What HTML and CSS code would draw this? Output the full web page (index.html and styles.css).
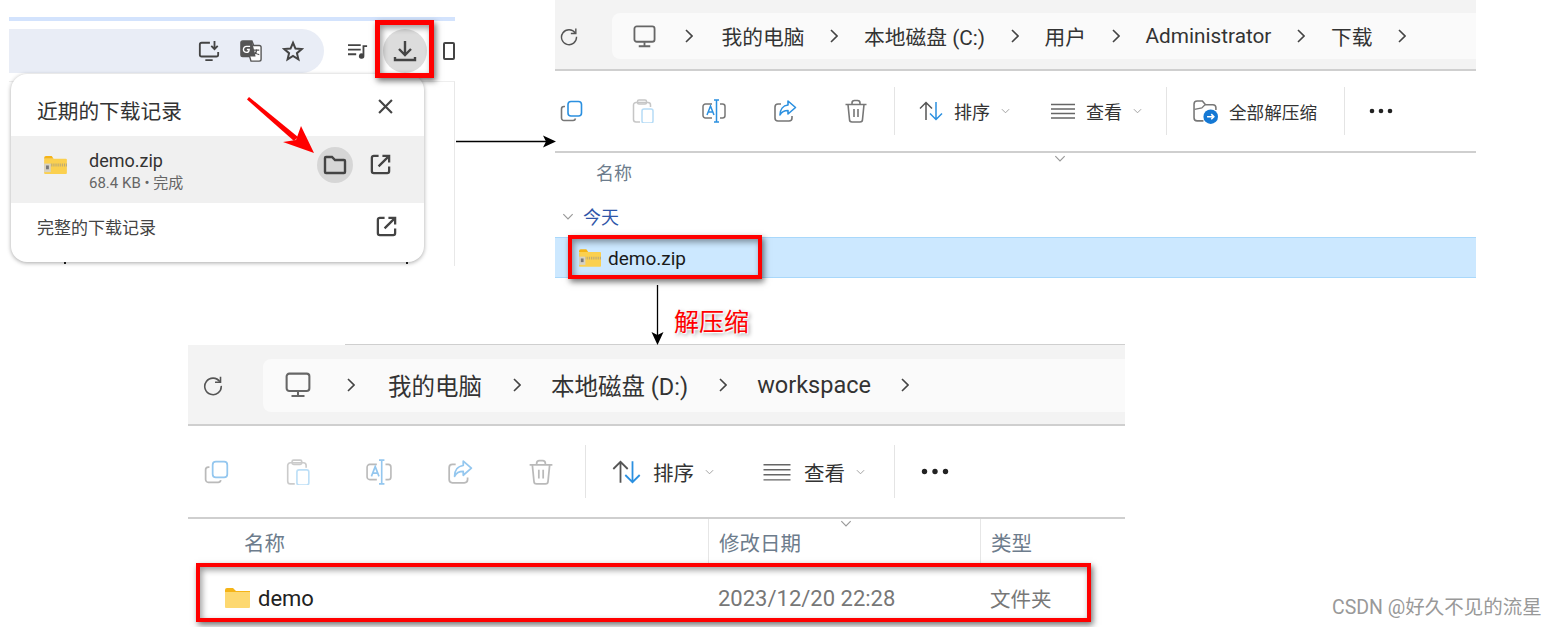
FILE: index.html
```html
<!DOCTYPE html>
<html lang="zh-CN">
<head>
  <meta charset="UTF-8">
  <title>demo.zip 下载并解压缩</title>
  <link rel="stylesheet" href="styles.css">
</head>
<body>

<svg class="defs" width="0" height="0">
  <symbol id="i-chevron" viewBox="0 0 8 14"><path d="M1 1l6 6-6 6" fill="none" stroke="#444" stroke-width="1.6"/></symbol>
  <symbol id="i-caret" viewBox="0 0 10 6"><path d="M1 1l4 4 4-4" fill="none" stroke="#999" stroke-width="1"/></symbol>
  <symbol id="i-refresh" viewBox="0 0 24 24" fill="none" stroke="#555" stroke-width="1.700"><path d="M19.5 8.5A9 9 0 1 0 21 13"/><path d="M20.2 3v6h-6"/></symbol>
  <symbol id="i-pc" viewBox="0 0 24 24" fill="none" stroke="#666" stroke-width="1.9"><rect x="1.5" y="1.5" width="21" height="16" rx="2.5"/><path d="M12 18v3.5M6 22.2h12"/></symbol>
  <symbol id="i-copy" viewBox="0 0 24 24" fill="none" stroke-width="1.6"><path d="M5 7.5H4a2.5 2.5 0 0 0-2.500 2.500v9A2.500 2.500 0 0 0 4 21.500h9a2.500 2.500 0 0 0 2.500-2" stroke="#777"/><rect x="8" y="2.500" width="13.500" height="14.500" rx="3" stroke="#2b90e0"/></symbol>
  <symbol id="i-paste" viewBox="0 0 24 24" fill="none" stroke-width="1.5"><path d="M9 23H5a2.500 2.500 0 0 1-2.500-2.500V6A2.500 2.500 0 0 1 5 3.500h12A2.500 2.500 0 0 1 19.500 6v2" stroke="#999"/><rect x="6.500" y="1" width="9" height="4" rx="1.500" stroke="#999"/><rect x="11" y="10" width="11" height="14" rx="2" stroke="#7cc0f0"/></symbol>
  <symbol id="i-rename" viewBox="0 0 24 24" fill="none" stroke-width="1.500"><path d="M10 5H3.500A2.500 2.500 0 0 0 1 7.500v9A2.500 2.500 0 0 0 3.500 19H10M18 5h2.500A2.500 2.500 0 0 1 23 7.500v9a2.500 2.500 0 0 1-2.500 2.500H18" stroke="#777"/><path d="M14.500 1v22M12 1h5M12 23h5" stroke="#2b90e0"/><path d="M5 16l3.500-9 3.500 9M6.200 13h4.600" stroke="#2b90e0"/></symbol>
  <symbol id="i-share" viewBox="0 0 24 24" fill="none" stroke-width="1.600"><path d="M8 5H5a3 3 0 0 0-3 3v11a3 3 0 0 0 3 3h11a3 3 0 0 0 3-3v-2" stroke="#777"/><path d="M15 2l7.500 6.500L15 15v-3.500c-4 0-6.500 1.500-8 4.500 0-5.500 3-9.500 8-10z" stroke="#2b90e0" stroke-linejoin="round"/></symbol>
  <symbol id="i-trash" viewBox="0 0 24 24" fill="none" stroke="#777" stroke-width="1.600"><path d="M1.500 5.500h21M8 5.500V4a2.500 2.500 0 0 1 2.500-2.500h3A2.500 2.500 0 0 1 16 4v1.500M4 5.500l1.500 15A2.500 2.500 0 0 0 8 23h8a2.500 2.500 0 0 0 2.500-2.500l1.500-15M10 10v8M14 10v8"/></symbol>
  <symbol id="i-sort" viewBox="0 0 24 20" fill="none" stroke-width="1.500"><path d="M7 19V1.500M1 7.500l6-6 6 6" stroke="#555"/><path d="M17 1v17.500M11 12.500l6 6 6-6" stroke="#2b90e0"/></symbol>
  <symbol id="i-view" viewBox="0 0 24 16" fill="none" stroke="#666" stroke-width="1.300"><path d="M0 1.500h24M0 6h24M0 10.500h24M0 15h24"/></symbol>
  <symbol id="i-extract" viewBox="0 0 24 24"><path d="M10 21H4a3 3 0 0 1-3-3V5a3 3 0 0 1 3-3h5l3 3.500h7a3 3 0 0 1 3 3v2" fill="none" stroke="#777" stroke-width="1.500"/><path d="M1.500 10l7-1.500 3-3" fill="none" stroke="#777" stroke-width="1.200"/><circle cx="17" cy="17" r="7" fill="#1478d4"/><path d="M13.500 17h6.500M17.500 14.500L20 17l-2.500 2.500" fill="none" stroke="#fff" stroke-width="1.500"/></symbol>
  <symbol id="i-dots" viewBox="0 0 24 6" fill="#222"><circle cx="3" cy="3" r="2.300"/><circle cx="12" cy="3" r="2.300"/><circle cx="21" cy="3" r="2.300"/></symbol>
  <symbol id="i-zip" viewBox="0 0 24 19"><path d="M0 2a2 2 0 0 1 2-2h6l2 3H0z" fill="#f5b417"/><rect y="3" width="24" height="16" rx="1" fill="#fbd04f"/><path d="M7 9.500h17" stroke="#b9a878" stroke-width="3" stroke-dasharray="1 1"/><rect y="8" width="7" height="9" fill="#d7d2c4"/><rect x="2" y="10" width="3" height="4" fill="#777"/></symbol>
  <symbol id="i-folder" viewBox="0 0 25 20"><path d="M0 2a2 2 0 0 1 2-2h6l3 3h14v2H0z" fill="#f5b417"/><path d="M0 4h25v15a1 1 0 0 1-1 1H1a1 1 0 0 1-1-1z" fill="#fdd870"/></symbol>
  <symbol id="i-open" viewBox="0 0 24 24" fill="none" stroke="#444" stroke-width="2.400"><path d="M10 3H5a2 2 0 0 0-2 2v14a2 2 0 0 0 2 2h14a2 2 0 0 0 2-2v-5"/><path d="M14 3h7v7M21 3L10 14"/></symbol>
</svg>

<!-- browser download bubble -->
<section class="chrome">
  <div class="chrome-strip"></div>
  <div class="chrome-bar">
    <div class="omnibox">
      <svg class="omni-icon" viewBox="0 0 24 24" fill="none" stroke="#444" stroke-width="2"><path d="M13 3H4a2 2 0 0 0-2 2v11a2 2 0 0 0 2 2h16a2 2 0 0 0 2-2v-3M8 22h8"/><path d="M18 1v9M14.500 6.500L18 10l3.500-3.500"/></svg>
      <svg class="omni-icon" viewBox="0 0 24 24"><path d="M3 1h10l2 5h6a2 2 0 0 1 2 2v13a2 2 0 0 1-2 2h-9l-1.500-5H3a2 2 0 0 1-2-2V3a2 2 0 0 1 2-2z" fill="#fff" stroke="#555" stroke-width="1.500"/><path d="M3 1h10l4 17H3a2 2 0 0 1-2-2V3a2 2 0 0 1 2-2z" fill="#555"/><path d="M11 7H7a2.500 2.500 0 1 0 0 6.500c2 0 3-1 3-3.200H7.500" fill="none" stroke="#fff" stroke-width="1.500"/><path d="M15 11h6M18 10v1.500c0 2-2 4-3.500 4.500M16 13c1 1.500 3 3 5 3" fill="none" stroke="#555" stroke-width="1.200"/></svg>
      <svg class="omni-icon omni-star" viewBox="0 0 24 24" fill="none" stroke="#444" stroke-width="2.200"><path d="M12 3l2.700 6.300 6.800.6-5.200 4.500 1.600 6.600L12 17.400 6.100 21l1.600-6.600L2.500 9.900l6.800-.6z"/></svg>
    </div>
    <svg class="media-icon" viewBox="0 0 22 18" fill="#444"><path d="M0 1h14v2H0zM0 6h14v2H0zM0 11h9v2H0z"/><path d="M16 2h5v2h-3v10a3 3 0 1 1-2-2.800z"/></svg>
    <div class="download-btn">
      <svg viewBox="0 0 24 24" fill="none" stroke="#444" stroke-width="2.400"><path d="M12 2v13M6 10l6 6 6-6M2 18v3h20v-3"/></svg>
    </div>
    <div class="side-icon"></div>
  </div>
  <div class="page-edge">
    <span class="speck speck-a"></span>
    <span class="speck speck-b"></span>
  </div>

  <div class="bubble">
    <div class="bubble-head">
      <span class="bubble-title">近期的下载记录</span>
      <svg class="bubble-close" viewBox="0 0 14 14" fill="none" stroke="#444" stroke-width="2"><path d="M1 1l12 12M13 1L1 13"/></svg>
    </div>
    <div class="bubble-item">
      <svg class="bubble-zip"><use href="#i-zip"/></svg>
      <div class="bubble-file">
        <div class="bubble-name">demo.zip</div>
        <div class="bubble-meta">68.4 KB • 完成</div>
      </div>
      <div class="folder-btn">
        <svg viewBox="0 0 24 20" fill="none" stroke="#444" stroke-width="2.400"><path d="M2 3a1 1 0 0 1 1-1h6l3 3h9a1 1 0 0 1 1 1v11a1 1 0 0 1-1 1H3a1 1 0 0 1-1-1z"/></svg>
      </div>
      <svg class="open-icon open-item"><use href="#i-open"/></svg>
    </div>
    <div class="bubble-foot">
      <span class="bubble-all">完整的下载记录</span>
      <svg class="open-icon"><use href="#i-open"/></svg>
    </div>
  </div>
</section>

<!-- explorer: C drive downloads -->
<section class="explorer ex-top">
  <div class="addr">
    <svg class="refresh"><use href="#i-refresh"/></svg>
    <div class="crumbs">
      <svg class="pc"><use href="#i-pc"/></svg>
      <svg class="chev"><use href="#i-chevron"/></svg>
      <span>我的电脑</span>
      <svg class="chev"><use href="#i-chevron"/></svg>
      <span>本地磁盘 (C:)</span>
      <svg class="chev"><use href="#i-chevron"/></svg>
      <span>用户</span>
      <svg class="chev"><use href="#i-chevron"/></svg>
      <span>Administrator</span>
      <svg class="chev"><use href="#i-chevron"/></svg>
      <span>下载</span>
      <svg class="chev"><use href="#i-chevron"/></svg>
    </div>
  </div>
  <div class="tools">
    <svg class="tool"><use href="#i-copy"/></svg>
    <svg class="tool dim"><use href="#i-paste"/></svg>
    <svg class="tool"><use href="#i-rename"/></svg>
    <svg class="tool"><use href="#i-share"/></svg>
    <svg class="tool tool-last"><use href="#i-trash"/></svg>
    <div class="sep"></div>
    <svg class="sort"><use href="#i-sort"/></svg>
    <span class="tool-label">排序</span>
    <svg class="caret"><use href="#i-caret"/></svg>
    <svg class="view"><use href="#i-view"/></svg>
    <span class="tool-label">查看</span>
    <svg class="caret caret-last"><use href="#i-caret"/></svg>
    <div class="sep"></div>
    <svg class="extract"><use href="#i-extract"/></svg>
    <span class="tool-label extract-label">全部解压缩</span>
    <div class="sep"></div>
    <svg class="dots"><use href="#i-dots"/></svg>
  </div>
  <div class="file-head">
    <span>名称</span>
    <svg class="head-caret"><use href="#i-caret"/></svg>
  </div>
  <div class="group-row">
    <svg class="group-caret"><use href="#i-caret"/></svg>
    <span>今天</span>
  </div>
  <div class="selected-row">
    <svg class="row-zip"><use href="#i-zip"/></svg>
    <span>demo.zip</span>
  </div>
</section>

<!-- explorer: D drive workspace -->
<section class="explorer ex-bottom">
  <div class="addr">
    <svg class="refresh"><use href="#i-refresh"/></svg>
    <div class="crumbs">
      <svg class="pc"><use href="#i-pc"/></svg>
      <svg class="chev"><use href="#i-chevron"/></svg>
      <span>我的电脑</span>
      <svg class="chev"><use href="#i-chevron"/></svg>
      <span>本地磁盘 (D:)</span>
      <svg class="chev"><use href="#i-chevron"/></svg>
      <span>workspace</span>
      <svg class="chev"><use href="#i-chevron"/></svg>
    </div>
  </div>
  <div class="tools">
    <svg class="tool dim"><use href="#i-copy"/></svg>
    <svg class="tool dim"><use href="#i-paste"/></svg>
    <svg class="tool dim"><use href="#i-rename"/></svg>
    <svg class="tool dim"><use href="#i-share"/></svg>
    <svg class="tool dim tool-last"><use href="#i-trash"/></svg>
    <div class="sep"></div>
    <svg class="sort"><use href="#i-sort"/></svg>
    <span class="tool-label">排序</span>
    <svg class="caret"><use href="#i-caret"/></svg>
    <svg class="view"><use href="#i-view"/></svg>
    <span class="tool-label">查看</span>
    <svg class="caret caret-last"><use href="#i-caret"/></svg>
    <div class="sep"></div>
    <svg class="dots"><use href="#i-dots"/></svg>
  </div>
  <div class="col-head">
    <span class="col col-name">名称</span>
    <span class="col col-date">修改日期<svg class="head-caret"><use href="#i-caret"/></svg></span>
    <span class="col col-type">类型</span>
  </div>
  <div class="folder-row">
    <div class="col-name cell-name">
      <svg class="row-folder"><use href="#i-folder"/></svg>
      <span>demo</span>
    </div>
    <span class="col-date cell">2023/12/20 22:28</span>
    <span class="col-type cell">文件夹</span>
  </div>
</section>

<!-- annotations drawn over the screenshots -->
<div class="mark mark-download"></div>
<div class="mark mark-zip"></div>
<div class="mark mark-demo"></div>
<span class="note">解压缩</span>
<span class="watermark">CSDN @好久不见的流星</span>

<svg class="overlay" width="1558" height="627" viewBox="0 0 1558 627">
  <path d="M456 141.500H546" stroke="#000" stroke-width="1.300"/>
  <path d="M556 141.500l-13-6 3 6-3 6z" fill="#000"/>
  <path d="M657.500 285V336" stroke="#000" stroke-width="1.300"/>
  <path d="M657.500 345l-6-13 6 3 6-3z" fill="#000"/>
  <path d="M247 99.500L249 97 298 137 294 141z" fill="#f00"/>
  <path d="M314 153L283 142 296 140 301 126z" fill="#f00"/>
</svg>

</body>
</html>
```

FILE: styles.css
```css
html, body {
  margin: 0;
  padding: 0;
}
body {
  position: relative;
  width: 1558px;
  height: 627px;
  overflow: hidden;
  background: #fff;
  font-family: Roboto, "Noto Sans CJK SC", sans-serif;
  color: #333;
}
svg {
  display: block;
  flex: none;
}
.defs {
  position: absolute;
}

/* browser crop */
.chrome {
  position: absolute;
  left: 9px;
  top: 17px;
  width: 446px;
  height: 250px;
}
.chrome-strip {
  height: 4px;
  background: #d3e3fd;
}
.chrome-bar {
  display: flex;
  align-items: center;
  height: 44px;
  margin-top: 8px;
}
.omnibox {
  display: flex;
  align-items: center;
  box-sizing: border-box;
  width: 315px;
  height: 44px;
  padding-left: 189px;
  background: #e9edf6;
  border-radius: 0 22px 22px 0;
}
.omni-icon {
  width: 22px;
  height: 22px;
  margin-right: 20px;
}
.omni-star {
  margin-right: 0;
}
.media-icon {
  width: 20px;
  height: 17px;
  margin-left: 24px;
}
.download-btn {
  display: flex;
  align-items: center;
  justify-content: center;
  width: 44px;
  height: 44px;
  margin-left: 15px;
  background: #dcdcdc;
  border-radius: 50%;
}
.download-btn svg {
  width: 24px;
  height: 24px;
}
.side-icon {
  box-sizing: border-box;
  width: 12px;
  height: 18px;
  margin-left: 16px;
  border: 2px solid #444;
  border-radius: 2px;
}
.page-edge {
  position: absolute;
  left: 0;
  top: 64px;
  width: 445px;
  height: 184px;
  border-top: 1px solid #eee;
  border-right: 1px solid #e8e8e8;
}
.speck {
  position: absolute;
  top: 179px;
  width: 2px;
  height: 3px;
  background: #222;
}
.speck-a {
  left: 55px;
}
.speck-b {
  left: 397px;
}
.bubble {
  position: absolute;
  left: 2px;
  top: 57px;
  width: 413px;
  height: 188px;
  background: #fff;
  border-radius: 16px;
  box-shadow: 0 1px 4px rgba(0, 0, 0, 0.35);
  overflow: hidden;
}
.bubble-head {
  display: flex;
  align-items: center;
  justify-content: space-between;
  box-sizing: border-box;
  height: 62px;
  padding: 10px 31px 0 26px;
}
.bubble-title {
  font-size: 20.700px;
}
.bubble-close {
  width: 15px;
  height: 15px;
  margin-top: -8px;
}
.bubble-item {
  display: flex;
  align-items: center;
  height: 67px;
  background: #f0f0f0;
}
.bubble-zip {
  width: 23px;
  height: 18px;
  margin-left: 33px;
  margin-top: -9px;
}
.bubble-file {
  width: 215px;
  margin-left: 22px;
  padding-top: 2px;
}
.bubble-name {
  font-size: 18px;
  line-height: 24px;
  color: #333;
}
.bubble-meta {
  font-size: 15px;
  line-height: 20px;
  color: #666;
}
.folder-btn {
  display: flex;
  align-items: center;
  justify-content: center;
  width: 36px;
  height: 36px;
  margin-left: 13px;
  margin-top: -10px;
  background: #d6d6d6;
  border-radius: 50%;
}
.folder-btn svg {
  width: 24px;
  height: 20px;
}
.open-icon {
  width: 23px;
  height: 23px;
}
.open-item {
  margin-left: 16px;
  margin-top: -10px;
}
.bubble-foot {
  display: flex;
  align-items: center;
  justify-content: space-between;
  height: 47px;
  padding: 0 26px 0 26px;
}
.bubble-all {
  font-size: 17px;
  color: #444;
}

/* explorer crops */
.explorer {
  position: absolute;
  background: #fff;
}
.addr {
  display: flex;
  align-items: center;
  background: #f3f3f3;
  border-bottom: 2px solid #cfcfcf;
}
.crumbs {
  display: flex;
  align-items: center;
  flex: 1;
  background: #fafafa;
  border-radius: 8px 0 0 8px;
}
.pc + .chev {
  margin-right: 3px;
}
.tools {
  display: flex;
  align-items: center;
  border-bottom: 2px solid #cfcfcf;
}
.sep {
  width: 1px;
  background: #e4e4e4;
}
.dim {
  opacity: 0.55;
}
.ex-bottom .dim {
  opacity: 0.5;
}

.ex-top {
  left: 555px;
  top: 0;
  width: 921px;
  height: 280px;
}
.ex-top .addr {
  box-sizing: border-box;
  height: 71px;
  padding-left: 4px;
  padding-top: 3px;
}
.ex-top .refresh {
  width: 20px;
  height: 20px;
}
.ex-top .crumbs {
  gap: 25.750px;
  height: 46px;
  margin-left: 33px;
  padding-left: 21px;
  font-size: 20.750px;
}
.ex-top .pc {
  width: 23px;
  height: 23px;
  margin-right: 3px;
}
.chev {
  width: 8px;
  height: 14px;
}
.ex-top .tools {
  box-sizing: border-box;
  height: 82px;
  padding-left: 5px;
}
.tool {
  width: 24px;
  height: 24px;
  margin-right: 47px;
}
.tool-last {
  margin-right: 26px;
}
.ex-top .sep {
  height: 48px;
}
.sort {
  width: 24px;
  height: 20px;
  margin-left: 24px;
}
.tool-label {
  margin-left: 11px;
  font-size: 18px;
  color: #333;
}
.caret {
  width: 9px;
  height: 6px;
  margin-left: 11px;
}
.view {
  width: 24px;
  height: 16px;
  margin-left: 41px;
}
.caret-last {
  margin-right: 24px;
}
.extract {
  width: 25px;
  height: 25px;
  margin-left: 26px;
}
.extract-label {
  width: 88px;
  margin-right: 27px;
  font-size: 17.600px;
  white-space: nowrap;
}
.dots {
  width: 24px;
  height: 6px;
  margin-left: 24px;
}
.file-head {
  position: relative;
  height: 42px;
  padding-left: 41px;
  font-size: 18px;
  line-height: 42px;
  color: #6d7c8c;
}
.file-head .head-caret {
  position: absolute;
  left: 499px;
  top: 2px;
}
.head-caret {
  width: 12px;
  height: 7px;
}
.group-row {
  display: flex;
  align-items: center;
  height: 42px;
  padding-left: 7px;
  font-size: 18px;
  color: #2f56a8;
}
.group-caret {
  width: 12px;
  height: 7px;
  margin-right: 9px;
}
.selected-row {
  display: flex;
  align-items: center;
  box-sizing: border-box;
  height: 41px;
  padding-left: 24px;
  padding-top: 1px;
  background: #cce8ff;
  border: 1px solid #a9d8fb;
  border-width: 1px 0;
  font-size: 19px;
  color: #1a1a1a;
}
.row-zip {
  width: 22px;
  height: 18px;
  margin-right: 7px;
}

.ex-bottom {
  left: 188px;
  top: 345px;
  width: 937px;
  height: 275px;
}
/* thin edge that only shows right of the lower window's left part */
.ex-bottom::before {
  content: "";
  position: absolute;
  left: 157px;
  right: 0;
  top: -1px;
  height: 1px;
  background: #cfcfcf;
}
.ex-bottom .addr {
  box-sizing: border-box;
  height: 81px;
  padding-left: 14px;
  padding-top: 1px;
}
.ex-bottom .refresh {
  width: 22px;
  height: 22px;
}
.ex-bottom .crumbs {
  gap: 30.500px;
  height: 53px;
  margin-left: 39px;
  padding-left: 22px;
  font-size: 23.500px;
}
.ex-bottom .pc {
  width: 26px;
  height: 26px;
  margin-right: 5px;
}
.ex-bottom .tools {
  box-sizing: border-box;
  height: 93px;
  padding-left: 16px;
}
.ex-bottom .tool {
  width: 26px;
  height: 26px;
  margin-right: 55px;
}
.ex-bottom .tool-last {
  margin-right: 31px;
}
.ex-bottom .sep {
  height: 53px;
}
.ex-bottom .sort {
  width: 29px;
  height: 24px;
  margin-left: 26px;
}
.ex-bottom .tool-label {
  margin-left: 12px;
  font-size: 20.500px;
}
.ex-bottom .caret {
  margin-left: 11px;
}
.ex-bottom .view {
  width: 30px;
  height: 18px;
  margin-left: 48px;
}
.ex-bottom .caret-last {
  margin-right: 29px;
}
.ex-bottom .dots {
  width: 28px;
  height: 7px;
  margin-left: 26px;
}
.col-head {
  display: flex;
  height: 47px;
  font-size: 20.500px;
  line-height: 50px;
  color: #6d7c8c;
}
.col {
  box-sizing: border-box;
}
.col-name {
  width: 520px;
  padding-left: 56px;
}
.col-date {
  position: relative;
  width: 272px;
  padding-left: 10px;
}
.col-head .col-date,
.col-head .col-type {
  border-left: 1px solid #e6e6e6;
}
.col-date .head-caret {
  position: absolute;
  left: 131px;
  top: 1px;
}
.col-type {
  padding-left: 10px;
}
.folder-row {
  display: flex;
  align-items: center;
  height: 64px;
  font-size: 22px;
  color: #222;
}
.cell-name {
  display: flex;
  align-items: center;
  box-sizing: border-box;
  padding-left: 37px;
}
.row-folder {
  width: 25px;
  height: 20px;
  margin-right: 8px;
}
.cell {
  box-sizing: border-box;
  color: #777;
}
.cell.col-type {
  font-size: 20.500px;
}

/* annotations */
.mark {
  position: absolute;
  box-sizing: border-box;
  border: 4px solid #f00;
  box-shadow: 2px 3px 6px rgba(0, 0, 0, 0.55), inset 2px 3px 6px rgba(0, 0, 0, 0.4);
}
.mark-download {
  left: 375px;
  top: 20px;
  width: 59px;
  height: 58px;
  border-width: 5px;
}
.mark-zip {
  left: 568px;
  top: 235px;
  width: 194px;
  height: 44px;
}
.mark-demo {
  left: 196px;
  top: 563px;
  width: 895px;
  height: 59px;
}
.note {
  position: absolute;
  left: 674px;
  top: 305px;
  font-size: 25px;
  line-height: 36px;
  color: #f00;
  text-shadow: 0 0 3px #fff, 1px 1px 1px #fff, 2px 2px 4px #888;
}
.watermark {
  position: absolute;
  left: 1332px;
  top: 596px;
  font-size: 19.500px;
  line-height: 24px;
  color: #999;
}
.overlay {
  position: absolute;
  left: 0;
  top: 0;
  pointer-events: none;
}
```
